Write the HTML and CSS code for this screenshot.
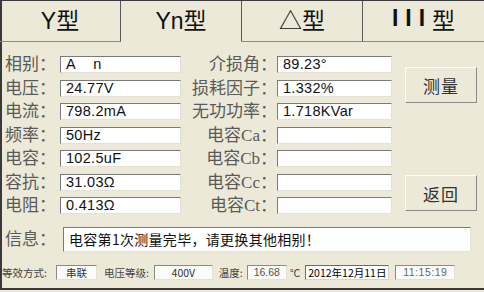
FILE: index.html
```html
<!DOCTYPE html>
<html lang="zh-CN">
<head>
<meta charset="utf-8">
<link rel="stylesheet" href="styles.css">
</head>
<body>
<div class="frame">
  <div class="tabs">
    <div class="tab">Y型</div>
    <div class="tab active">Yn型</div>
    <div class="tab">△型</div>
    <div class="tab last"><span class="bars">III</span>型</div>
  </div>
  <div class="main">
    <div class="grid left">
      <div class="lbl">相别：</div><div class="inp">A&nbsp;&nbsp;&nbsp;&nbsp;n</div>
      <div class="lbl">电压：</div><div class="inp">24.77V</div>
      <div class="lbl">电流：</div><div class="inp">798.2mA</div>
      <div class="lbl">频率：</div><div class="inp">50Hz</div>
      <div class="lbl">电容：</div><div class="inp">102.5uF</div>
      <div class="lbl">容抗：</div><div class="inp">31.03Ω</div>
      <div class="lbl">电阻：</div><div class="inp">0.413Ω</div>
    </div>
    <div class="grid right">
      <div class="lbl">介损角：</div><div class="inp">89.23°</div>
      <div class="lbl">损耗因子：</div><div class="inp">1.332%</div>
      <div class="lbl">无功功率：</div><div class="inp">1.718KVar</div>
      <div class="lbl">电容Ca：</div><div class="inp"></div>
      <div class="lbl">电容Cb：</div><div class="inp"></div>
      <div class="lbl">电容Cc：</div><div class="inp"></div>
      <div class="lbl">电容Ct：</div><div class="inp"></div>
    </div>
    <div class="btns">
      <div class="btn">测量</div>
      <div class="btn">返回</div>
    </div>
  </div>
  <div class="info">
    <div class="lbl">信息：</div>
    <div class="inp msg">电容第1次测量完毕，请更换其他相别！</div>
  </div>
  <div class="status">
    <span class="s-lbl">等效方式:</span>
    <span class="box b1">串联</span>
    <span class="s-lbl l2">电压等级:</span>
    <span class="box b2">400V</span>
    <span class="s-lbl l3">温度:</span>
    <span class="box b3">16.68</span>
    <span class="s-lbl deg">℃</span>
    <span class="box b4">2012年12月11日</span>
    <span class="box b5">11:15:19</span>
  </div>
</div>
</body>
</html>
```

FILE: styles.css
```css
html, body {
  margin: 0;
  padding: 0;
  background: #ece9d8;
}
body {
  width: 484px;
  height: 292px;
  overflow: hidden;
  font-family: "Liberation Sans", "Noto Sans CJK SC", sans-serif;
}
.frame {
  width: 484px;
  height: 290px;
  box-sizing: border-box;
  border-left: 2px solid #3a3a3a;
  border-bottom: 2px solid #3a3a3a;
  border-top: 1px solid #3a3a3a;
}
.tabs {
  display: flex;
  height: 41px;
  margin-left: -2px;
}
.tab {
  width: 121px;
  box-sizing: border-box;
  border-right: 1px solid #5a5a5a;
  border-bottom: 1px solid #8a8a8a;
  display: flex;
  align-items: center;
  justify-content: center;
  font-family: "Liberation Sans", "Noto Sans CJK SC", sans-serif;
  font-size: 23px;
  color: #111;
  padding-bottom: 5px;
}
.tab.active { border-bottom-color: transparent; }
.tab.last { border-right: none; }
.bars {
  letter-spacing: 7px;
  font-weight: bold;
  display: inline-block;
}
.main {
  display: flex;
  padding-top: 14px;
  height: 170px;
}
.grid {
  display: grid;
  grid-auto-rows: 17px;
  row-gap: 6.5px;
  align-items: center;
}
.left {
  grid-template-columns: 55px 121px;
  padding-left: 3px;
}
.right {
  grid-template-columns: 96px 115px;
}
.lbl {
  font-family: "Liberation Serif", "Noto Sans CJK SC", serif;
  font-size: 17px;
  color: #5a5a5a;
  line-height: 17px;
  white-space: nowrap;
}
.right .lbl { text-align: right; }
.inp {
  height: 17px;
  box-sizing: border-box;
  background: #fff;
  border: 1px solid;
  border-color: #7a7a7a #e4e2d6 #e4e2d6 #7a7a7a;
  font-size: 14.5px;
  line-height: 15px;
  padding-left: 5px;
  color: #111;
  white-space: nowrap;
  letter-spacing: 0.3px;
}
.btns {
  display: flex;
  flex-direction: column;
  padding-left: 13px;
  padding-top: 11px;
  gap: 72px;
}
.btn {
  width: 72px;
  height: 36px;
  box-sizing: border-box;
  border: 1px solid;
  border-color: #fdfdfb #8a8a86 #8a8a86 #fdfdfb;
  display: flex;
  align-items: center;
  justify-content: center;
  font-family: "Noto Sans CJK SC", sans-serif;
  font-size: 17px;
  color: #333;
  letter-spacing: 1px;
}
.info {
  display: flex;
  align-items: center;
  padding-left: 3px;
  margin-top: 1px;
  height: 25px;
}
.info .lbl { width: 58px; }
.msg {
  width: 408px;
  height: 25px;
  font-family: "Noto Sans CJK SC", sans-serif;
  font-size: 14px;
  line-height: 23px;
  padding-left: 5px;
  color: #111;
}
.status {
  display: flex;
  align-items: center;
  height: 15px;
  margin-top: 13px;
  font-size: 10.5px;
  font-family: "Noto Sans CJK SC", sans-serif;
}
.s-lbl {
  color: #444;
  white-space: nowrap;
}
.box {
  height: 15px;
  box-sizing: border-box;
  background: #fbfbf8;
  border: 1px solid;
  border-color: #8a8a86 #e4e2d6 #e4e2d6 #8a8a86;
  display: flex;
  align-items: center;
  justify-content: center;
  color: #333;
  line-height: 13px;
}
.b1 { width: 41px; margin-left: 9px; }
.l2 { margin-left: 7px; }
.b2 { width: 59px; margin-left: 5px; }
.l3 { margin-left: 6px; }
.b3 { width: 40px; margin-left: 4px; color: #555; font-family: "Liberation Sans", sans-serif; }
.deg { margin-left: 3px; }
.b4 { width: 84px; margin-left: 5px; background: #fff; color: #000; justify-content: flex-start; padding-left: 2px; border-color: #6a6a6a #d8d6ca #d8d6ca #6a6a6a; }
.b5 { width: 60px; margin-left: 6px; color: #666; font-family: "Liberation Sans", sans-serif; letter-spacing: 0.5px; }
```
